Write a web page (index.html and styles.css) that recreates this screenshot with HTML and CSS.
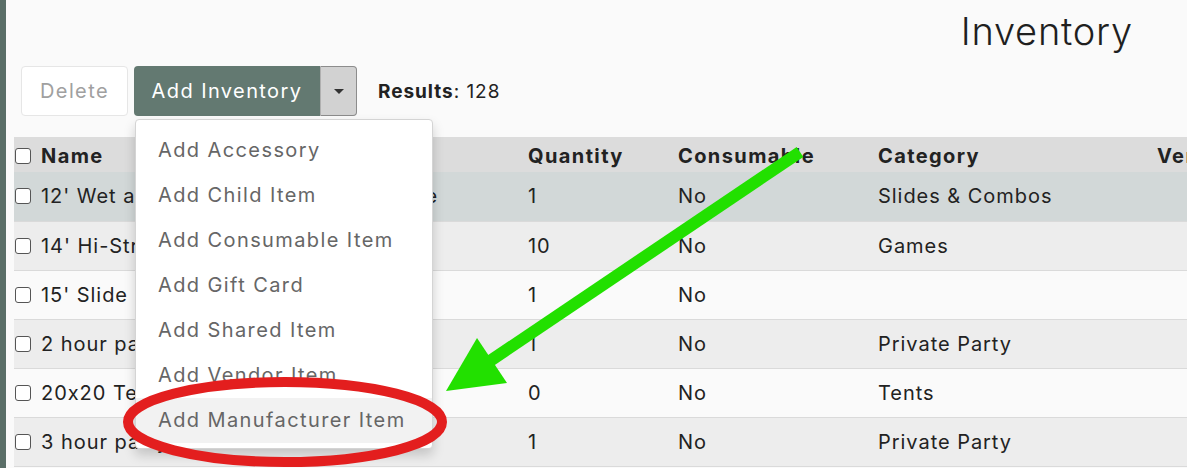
FILE: index.html
```html
<!DOCTYPE html>
<html lang="en">
<head>
<meta charset="utf-8">
<title>Inventory</title>
<link rel="stylesheet" href="styles.css">
</head>
<body>
<div class="app">
  <aside class="rail"></aside>
  <main class="content">
    <header class="page-head">
      <h1>Inventory</h1>
    </header>

    <div class="toolbar">
      <button class="btn btn-light">Delete</button>
      <div class="split">
        <button class="btn btn-primary">Add Inventory</button>
        <button class="btn btn-caret"><span class="caret"></span></button>
        <ul class="menu">
          <li>Add Accessory</li>
          <li>Add Child Item</li>
          <li>Add Consumable Item</li>
          <li>Add Gift Card</li>
          <li>Add Shared Item</li>
          <li>Add Vendor Item</li>
          <li class="active">Add Manufacturer Item</li>
        </ul>
      </div>
      <div class="results"><b>Results</b>: 128</div>
    </div>

    <table class="grid">
      <colgroup>
        <col class="c-name"><col class="c-qty"><col class="c-cons"><col class="c-cat"><col class="c-vendor">
      </colgroup>
      <thead>
        <tr>
          <th><span class="check"></span>Name</th>
          <th>Quantity</th>
          <th>Consumable</th>
          <th>Category</th>
          <th>Vendor</th>
        </tr>
      </thead>
      <tbody>
        <tr class="selected">
          <td><span class="check"></span>12' Wet and Dry Dual Lane Water Slide</td>
          <td>1</td><td>No</td><td>Slides &amp; Combos</td><td></td>
        </tr>
        <tr>
          <td><span class="check"></span>14' Hi-Striker</td>
          <td>10</td><td>No</td><td>Games</td><td></td>
        </tr>
        <tr>
          <td><span class="check"></span>15' Slide</td>
          <td>1</td><td>No</td><td></td><td></td>
        </tr>
        <tr>
          <td><span class="check"></span>2 hour party</td>
          <td>1</td><td>No</td><td>Private Party</td><td></td>
        </tr>
        <tr>
          <td><span class="check"></span>20x20 Tent</td>
          <td>0</td><td>No</td><td>Tents</td><td></td>
        </tr>
        <tr>
          <td><span class="check"></span>3 hour party</td>
          <td>1</td><td>No</td><td>Private Party</td><td></td>
        </tr>
      </tbody>
    </table>
  </main>
</div>

<svg class="marks" width="1187" height="468" viewBox="0 0 1187 468" aria-hidden="true">
  <line x1="800" y1="152" x2="490" y2="361" stroke="#22e000" stroke-width="12"/>
  <polygon points="446,391 477,338 507,383" fill="#22e000"/>
  <ellipse cx="285" cy="422" rx="157" ry="40" fill="none" stroke="#e31e1e" stroke-width="10"/>
</svg>
</body>
</html>
```

FILE: styles.css
```css
* { box-sizing: border-box; }

html, body {
  margin: 0;
  height: 100%;
  overflow: hidden;
}

body {
  background: #fafafa;
  font-family: "Inter", "Open Sans", sans-serif;
  font-feature-settings: "calt" 0;
  letter-spacing: 0.06em;
  color: #222;
  position: relative;
}

.app {
  display: flex;
  height: 100%;
}

.rail {
  flex: 0 0 6px;
  background: #5a6e67;
}

.content {
  flex: 1;
  padding-left: 8px;
  min-width: 0;
}

.page-head {
  display: flex;
  justify-content: flex-end;
  padding: 12px 54px 0 0;
}

.page-head h1 {
  margin: 0;
  font-size: 38px;
  line-height: 38px;
  font-weight: 300;
  letter-spacing: 0.02em;
  color: #1f1f1f;
}

.toolbar {
  display: flex;
  align-items: center;
  gap: 6px;
  margin: 16px 0 21px 7px;
  height: 50px;
}

.btn {
  font-family: inherit;
  font-feature-settings: inherit;
  letter-spacing: 0.07em;
  font-size: 20px;
  height: 50px;
  border-radius: 4px;
  border: 1px solid transparent;
  padding: 0;
  cursor: pointer;
}

.btn-light {
  background: #fff;
  border-color: #e6e6e6;
  color: #a0a0a0;
  width: 107px;
}

.split {
  position: relative;
  display: flex;
}

.btn-primary {
  background: #637971;
  color: #fff;
  border-radius: 4px 0 0 4px;
  width: 186px;
}

.btn-caret {
  width: 37px;
  background: #d2d2d2;
  border-color: #8c8c8c;
  border-left: 1px solid #b0b0b0;
  border-radius: 0 4px 4px 0;
  display: flex;
  align-items: center;
  justify-content: center;
}

.caret {
  width: 0;
  height: 0;
  border-left: 5px solid transparent;
  border-right: 5px solid transparent;
  border-top: 5px solid #333;
}

.menu {
  position: absolute;
  top: 53px;
  left: 1px;
  width: 298px;
  margin: 0;
  padding: 8px 0 5px;
  list-style: none;
  background: #fff;
  border: 1px solid #d4d4d4;
  border-radius: 4px;
  box-shadow: 0 6px 12px rgba(0, 0, 0, 0.175);
  z-index: 5;
}

.menu li {
  height: 45px;
  line-height: 45px;
  padding-left: 22px;
  font-size: 20px;
  letter-spacing: 0.07em;
  color: #666;
  white-space: nowrap;
}

.menu li.active {
  background: #f2f2f2;
}

.results {
  margin-left: 15px;
  font-size: 19px;
  color: #222;
}

.results b {
  font-weight: 700;
}

.grid {
  border-collapse: collapse;
  table-layout: fixed;
  width: 1343px;
  font-size: 20px;
}

.c-name { width: 514px; }
.c-qty { width: 150px; }
.c-cons { width: 200px; }
.c-cat { width: 279px; }
.c-vendor { width: 200px; }

.grid th,
.grid td {
  text-align: left;
  padding: 0;
  white-space: nowrap;
  overflow: hidden;
  vertical-align: middle;
}

.grid th:first-child,
.grid td:first-child {
  padding-left: 1px;
}

.grid thead th {
  height: 35px;
  background: #dcdcdc;
  font-weight: 700;
  letter-spacing: 0.07em;
  color: #222;
  padding-top: 3px;
}

.grid tbody td {
  height: 49px;
  border-bottom: 1px solid #dadada;
  color: #222;
}

.grid tbody tr { background: #ededed; }
.grid tbody tr:nth-child(odd) { background: #fafafa; }
.grid tbody tr.selected { background: #d2d8d8; }

.check {
  display: inline-block;
  width: 16px;
  height: 16px;
  border: 1.5px solid #555;
  border-radius: 3px;
  background: #fff;
  margin-right: 10px;
  vertical-align: -1px;
}

.marks {
  position: absolute;
  top: 0;
  left: 0;
  pointer-events: none;
  z-index: 10;
}
```
